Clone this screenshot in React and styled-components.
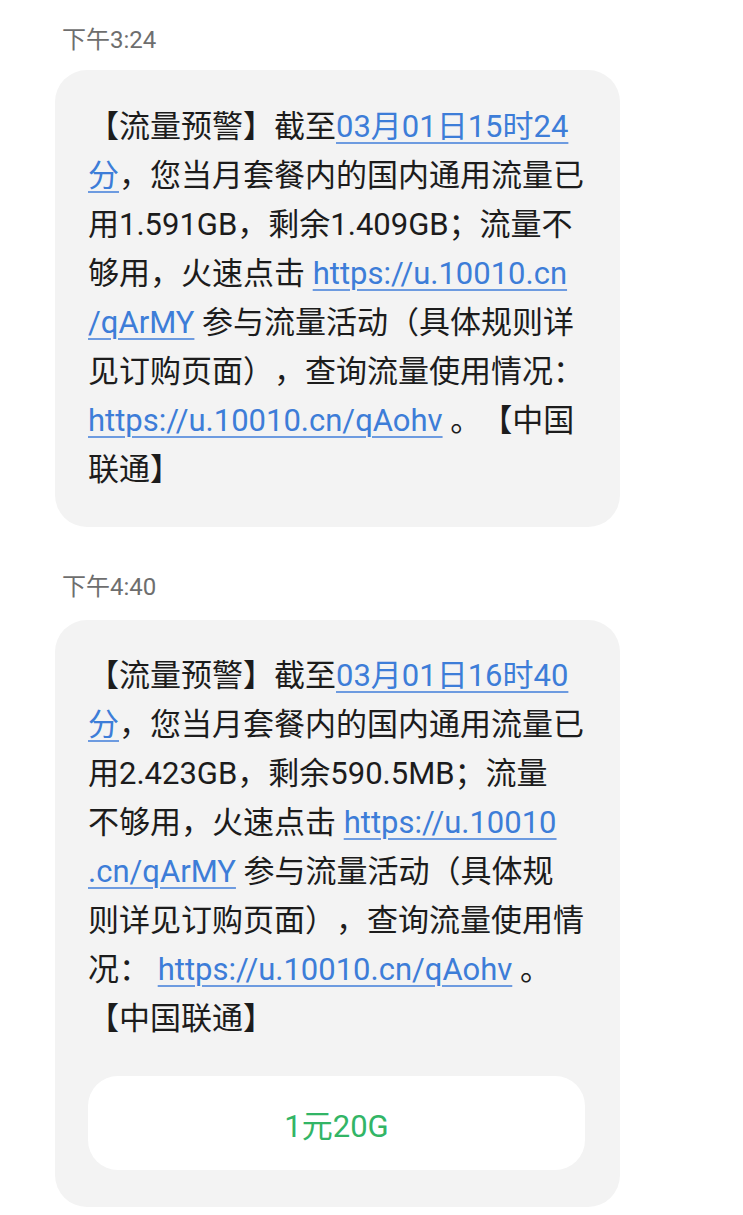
import React from 'react';
import styled, {createGlobalStyle} from 'styled-components';

const GlobalStyle = createGlobalStyle`
  html, body {
    margin: 0;
    padding: 0;
    background: #ffffff;
  }
  body {
    font-family: "Roboto", "Noto Sans CJK SC", sans-serif;
    text-spacing-trim: space-all;
  }
`;

const Page = styled.div`
  width: 743px;
  min-height: 1215px;
  box-sizing: border-box;
  padding: 25px 0 0 55px;
  display: flex;
  flex-direction: column;
  gap: 45px;
`;

const MessageGroup = styled.section`
  display: flex;
  flex-direction: column;
  gap: ${props => props.$gap}px;
`;

const Time = styled.div`
  height: 30px;
  line-height: 30px;
  padding-left: 7px;
  font-size: 24px;
  color: #6e6e6e;
`;

const Bubble = styled.div`
  width: 565px;
  box-sizing: border-box;
  padding: ${props => props.$top}px 35px 33px 33px;
  background: #f3f3f3;
  border-radius: 32px;
`;

const Line = styled.div`
  height: 49px;
  line-height: 49px;
  font-size: 31px;
  color: #1c1c1c;
  white-space: nowrap;
`;

const Link = styled.span`
  color: #3d7dd8;
  text-decoration: underline;
  text-decoration-color: #6d9be0;
  text-decoration-thickness: 2px;
  text-underline-offset: 5px;
`;

const ActionButton = styled.div`
  margin: 33px 0 4px;
  height: 94px;
  border-radius: 30px;
  background: #ffffff;
  display: flex;
  align-items: center;
  justify-content: center;
  font-size: 31px;
  color: #32b566;
`;

const App = () => {
    return (
        <>
            <GlobalStyle/>
            <Page>
                <MessageGroup $gap={15}>
                    <Time>下午3:24</Time>
                    <Bubble $top={32}>
                        <Line>【流量预警】截至<Link>03月01日15时24</Link></Line>
                        <Line><Link>分</Link>，您当月套餐内的国内通用流量已</Line>
                        <Line>用1.591GB，剩余1.409GB；流量不</Line>
                        <Line>够用，火速点击 <Link>https://u.10010.cn</Link></Line>
                        <Line><Link>/qArMY</Link> 参与流量活动（具体规则详</Line>
                        <Line>见订购页面），查询流量使用情况：</Line>
                        <Line><Link>https://u.10010.cn/qAohv</Link> 。【中国</Line>
                        <Line>联通】</Line>
                    </Bubble>
                </MessageGroup>
                <MessageGroup $gap={18}>
                    <Time>下午4:40</Time>
                    <Bubble $top={31}>
                        <Line>【流量预警】截至<Link>03月01日16时40</Link></Line>
                        <Line><Link>分</Link>，您当月套餐内的国内通用流量已</Line>
                        <Line>用2.423GB，剩余590.5MB；流量</Line>
                        <Line>不够用，火速点击 <Link>https://u.10010</Link></Line>
                        <Line><Link>.cn/qArMY</Link> 参与流量活动（具体规</Line>
                        <Line>则详见订购页面），查询流量使用情</Line>
                        <Line>况： <Link>https://u.10010.cn/qAohv</Link> 。</Line>
                        <Line>【中国联通】</Line>
                        <ActionButton>1元20G</ActionButton>
                    </Bubble>
                </MessageGroup>
            </Page>
        </>
    );
}

export default App;
